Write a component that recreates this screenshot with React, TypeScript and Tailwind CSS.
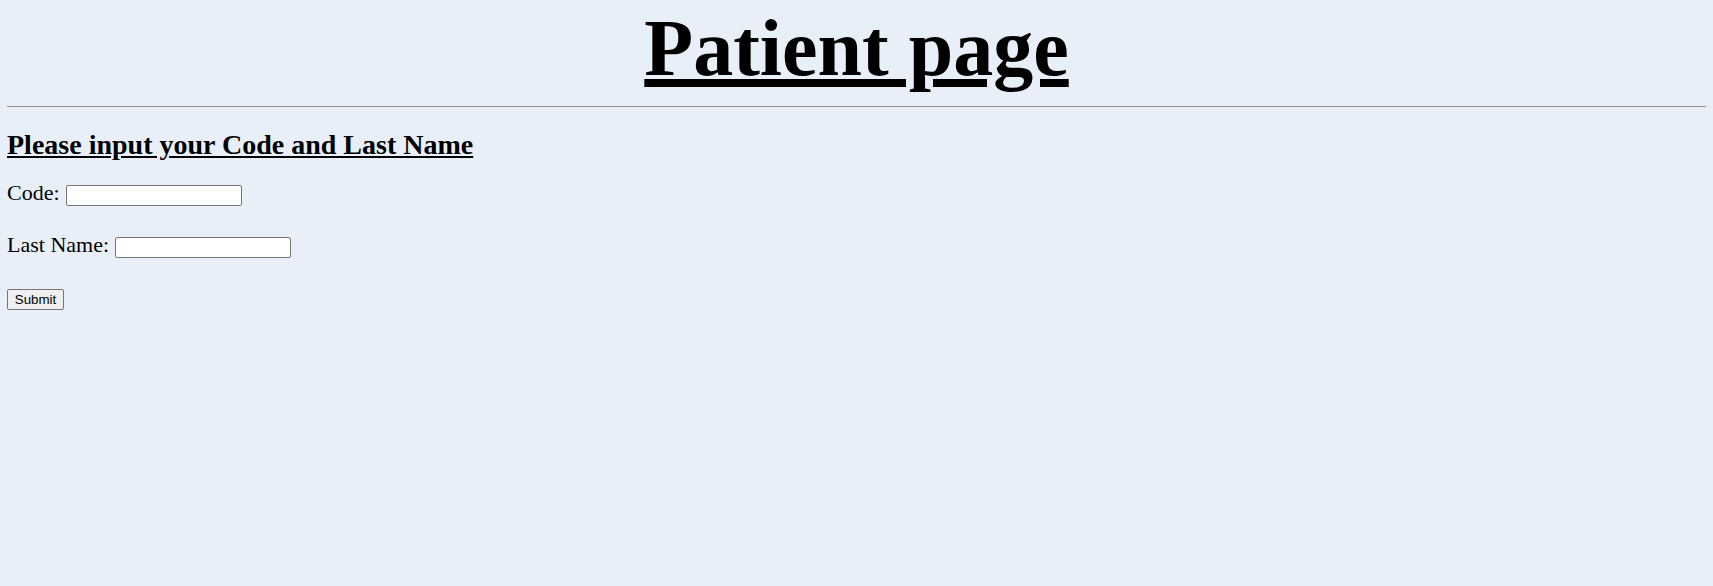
const serif = "font-['Liberation_Serif','Times_New_Roman',serif]";

const fields = [
  { id: "code", label: "Code:" },
  { id: "lastName", label: "Last Name:" },
];

const App = () => {
  return (
    <div
      className={`min-h-screen bg-[#e9eff8] px-[7px] text-black ${serif}`}
    >
      <h1 className="pt-[2px] text-center text-[80px] font-bold leading-[92px] underline">
        Patient page
      </h1>
      <div className="mt-[12px] h-px bg-[#8f8f8f]" />

      <h2 className="mt-[22px] text-[28px] font-bold leading-[32px] underline">
        Please input your Code and Last Name
      </h2>

      <form onSubmit={(e) => e.preventDefault()}>
        {fields.map((f, i) => (
          <div
            key={f.id}
            className={`flex items-start text-[22px] leading-[26px] ${
              i === 0 ? "mt-[19px]" : "mt-[26px]"
            }`}
          >
            <label htmlFor={f.id}>{f.label}</label>
            <input
              id={f.id}
              type="text"
              className="ml-[6px] mt-[5px] h-[21px] w-[176px] rounded-[2px] border border-[#767676] bg-white px-[2px] font-['Liberation_Sans',Arial,sans-serif] text-[13.33px]"
            />
          </div>
        ))}

        <button
          type="submit"
          className="mt-[31px] block h-[21px] w-[57px] rounded-[2px] border border-[#767676] bg-[#efefef] font-['Liberation_Sans',Arial,sans-serif] text-[13.33px] leading-[15px]"
        >
          Submit
        </button>
      </form>
    </div>
  );
};

export default App;
